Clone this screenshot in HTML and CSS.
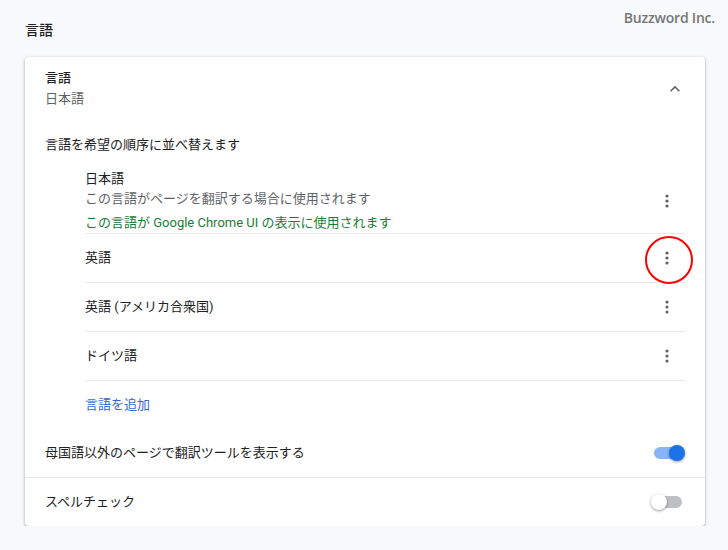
FILE: index.html
```html
<!DOCTYPE html>
<html lang="ja">
<head>
<meta charset="utf-8">
<title>言語</title>
<link rel="stylesheet" href="styles.css">
</head>
<body>
<div class="watermark">Buzzword Inc.</div>
<h1 class="page-title">言語</h1>
<section class="card">
  <div class="card-head">
    <div class="head-text">
      <div class="title">言語</div>
      <div class="sub">日本語</div>
    </div>
    <button class="chevron" aria-label="閉じる">
      <svg width="20" height="20" viewBox="0 0 24 24"><path d="M12 8l-6 6 1.41 1.41L12 10.83l4.59 4.58L18 14z" fill="#5f6368"/></svg>
    </button>
  </div>
  <div class="desc">言語を希望の順序に並べ替えます</div>
  <ul class="lang-list">
    <li class="lang first">
      <div class="lang-text">
        <div class="lang-name">日本語</div>
        <div class="lang-note">この言語がページを翻訳する場合に使用されます</div>
        <div class="lang-ui">この言語が Google Chrome UI の表示に使用されます</div>
      </div>
      <button class="kebab" aria-label="その他の操作">
        <svg width="4" height="14" viewBox="0 0 4 14"><circle cx="2" cy="2" r="1.6"/><circle cx="2" cy="7" r="1.6"/><circle cx="2" cy="12" r="1.6"/></svg>
      </button>
    </li>
    <li class="lang">
      <div class="lang-name">英語</div>
      <button class="kebab marked" aria-label="その他の操作">
        <svg width="4" height="14" viewBox="0 0 4 14"><circle cx="2" cy="2" r="1.6"/><circle cx="2" cy="7" r="1.6"/><circle cx="2" cy="12" r="1.6"/></svg>
      </button>
    </li>
    <li class="lang">
      <div class="lang-name">英語 (アメリカ合衆国)</div>
      <button class="kebab" aria-label="その他の操作">
        <svg width="4" height="14" viewBox="0 0 4 14"><circle cx="2" cy="2" r="1.6"/><circle cx="2" cy="7" r="1.6"/><circle cx="2" cy="12" r="1.6"/></svg>
      </button>
    </li>
    <li class="lang">
      <div class="lang-name">ドイツ語</div>
      <button class="kebab" aria-label="その他の操作">
        <svg width="4" height="14" viewBox="0 0 4 14"><circle cx="2" cy="2" r="1.6"/><circle cx="2" cy="7" r="1.6"/><circle cx="2" cy="12" r="1.6"/></svg>
      </button>
    </li>
    <li class="lang add">
      <a class="add-link" href="#">言語を追加</a>
    </li>
  </ul>
  <div class="setting">
    <span>母国語以外のページで翻訳ツールを表示する</span>
    <span class="toggle on"><span class="knob"></span></span>
  </div>
  <div class="setting bordered">
    <span>スペルチェック</span>
    <span class="toggle"><span class="knob"></span></span>
  </div>
</section>
</body>
</html>
```

FILE: styles.css
```css
* { box-sizing: border-box; }

body {
  margin: 0;
  padding: 20px 23px 0 25px;
  background: #f8f9fa;
  font-family: Roboto, "Noto Sans CJK JP", sans-serif;
  font-size: 13px;
  color: #202124;
}

.watermark {
  position: absolute;
  top: 8px;
  right: 13px;
  font-family: "Open Sans", sans-serif;
  font-weight: 600;
  font-size: 14px;
  line-height: 20px;
  color: #777;
  letter-spacing: -0.2px;
}

.page-title {
  margin: 0 0 17px;
  font-size: 14px;
  font-weight: 500;
  line-height: 20px;
}

.card {
  background: #fff;
  border-radius: 4px;
  box-shadow: 0 1px 2px rgba(60, 64, 67, 0.3), 0 1px 3px 1px rgba(60, 64, 67, 0.15);
  width: 680px;
}

.card-head {
  display: flex;
  align-items: center;
  justify-content: space-between;
  height: 63px;
  padding: 0 20px;
}

.head-text { line-height: 21px; padding-bottom: 1px; }
.title { font-weight: 500; }
.sub { color: #5f6368; }

.chevron {
  width: 20px;
  height: 20px;
  padding: 0;
  border: 0;
  background: none;
  display: flex;
  align-items: center;
  justify-content: center;
}

.desc {
  height: 49px;
  display: flex;
  align-items: center;
  padding: 0 20px;
  line-height: 20px;
}

.lang-list {
  list-style: none;
  margin: 0;
  padding: 0 20px 0 60px;
}

.lang {
  display: flex;
  align-items: center;
  justify-content: space-between;
  min-height: 49px;
  border-top: 1px solid #e8eaed;
  line-height: 20px;
}

.lang.first { border-top: 0; min-height: 64px; }

.lang-note { color: #5f6368; }
.lang-ui { color: #188038; margin-top: 4px; }

.kebab {
  position: relative;
  width: 36px;
  height: 36px;
  padding: 0;
  border: 0;
  background: none;
  display: flex;
  align-items: center;
  justify-content: center;
  fill: #5f6368;
}

.kebab.marked::after {
  content: "";
  position: absolute;
  left: -4px;
  top: -4px;
  width: 44px;
  height: 44px;
  border: 2px solid #f00;
  border-radius: 50%;
}

.add-link {
  color: #3367d6;
  text-decoration: none;
}

.setting {
  display: flex;
  align-items: center;
  justify-content: space-between;
  height: 48px;
  padding: 0 20px;
  line-height: 20px;
}

.setting.bordered {
  border-top: 1px solid #e8eaed;
  height: 49px;
}

.toggle {
  position: relative;
  width: 28px;
  height: 12px;
  margin-right: 3px;
  border-radius: 6px;
  background: #bdc1c6;
}

.toggle .knob {
  position: absolute;
  top: -2px;
  left: -3px;
  width: 16px;
  height: 16px;
  border-radius: 50%;
  background: #fff;
  box-shadow: 0 1px 3px rgba(0, 0, 0, 0.4);
}

.toggle.on { background: #8ab4f8; }
.toggle.on .knob { left: 15px; background: #1a73e8; }
```
